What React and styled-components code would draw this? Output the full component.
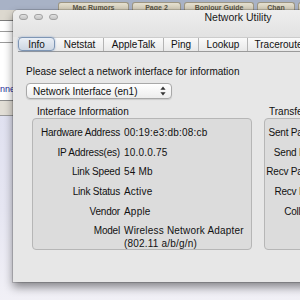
import React from 'react';
import styled, { createGlobalStyle } from 'styled-components';

const Global = createGlobalStyle`
  html, body {
    margin: 0;
    padding: 0;
    overflow: hidden;
  }
  body {
    font-family: "Liberation Sans", Arial, sans-serif;
  }
`;

const Desktop = styled.div`
  position: relative;
  width: 300px;
  height: 300px;
  overflow: hidden;
  background: linear-gradient(180deg, #d9dbee 0%, #e6e6f2 70%, #f1f0f6 100%);
`;

// browser page behind the utility window
const BrowserBar = styled.div`
  height: 10px;
  background: #a8b2c6;
  display: flex;
  align-items: flex-end;
  gap: 3px;
  padding-left: 58px;
  overflow: hidden;
`;

const BrowserTab = styled.div`
  flex: none;
  width: ${p => p.w}px;
  height: 7px;
  background: linear-gradient(180deg, #e4dfcf, #cfc8b4);
  border: 1px solid #9d9683;
  border-bottom: none;
  border-radius: 3px 3px 0 0;
  font-size: 7px;
  font-weight: bold;
  color: #5a5646;
  text-align: center;
  line-height: 9px;
  overflow: hidden;
  white-space: nowrap;
`;

const Page = styled.div`
  display: flex;
  flex-direction: column;
`;

const Band = styled.div`
  height: ${p => p.h}px;
  background: ${p => p.bg};
  border-bottom: 1px solid ${p => p.line || 'transparent'};
  font-size: 9px;
  color: #2b2b9c;
  line-height: ${p => p.h}px;
  white-space: nowrap;
`;

// the Network Utility window
const Window = styled.div`
  position: absolute;
  left: 13px;
  top: 10px;
  width: 450px;
  height: 272px;
  background: #e7e7e7;
  border-radius: 5px 5px 0 0;
  box-shadow: 0 5px 10px rgba(0, 0, 0, 0.45), 0 0 0 1px rgba(0, 0, 0, 0.15);
  color: #111;
  font-size: 10px;
`;

const TitleBar = styled.div`
  height: 27px;
  display: grid;
  grid-template-columns: 1fr auto 1fr;
  align-items: start;
  background: linear-gradient(180deg, #eeeeee, #e2e2e2);
  border-radius: 5px 5px 0 0;
`;

const Lights = styled.div`
  display: flex;
  gap: 6px;
  padding: 4px 0 0 6px;
`;

const Light = styled.span`
  width: 9px;
  height: 6px;
  border-radius: 3px;
  background: linear-gradient(180deg, #e0e0e0, #c4c4c4);
  border: 1px solid #a2a2a2;
  box-sizing: border-box;
`;

const Title = styled.div`
  font-size: 10.5px;
  line-height: 12px;
  padding-top: 1px;
  color: #1a1a1a;
`;

const TabStrip = styled.div`
  display: flex;
  height: 13px;
  margin-left: 5px;
  background: linear-gradient(180deg, #fafafa, #e8e8e8);
  border-top: 1px solid #cccccc;
  border-bottom: 1px solid #9a9a9a;
`;

const Tab = styled.div`
  flex: none;
  width: ${p => p.w}px;
  box-sizing: border-box;
  text-align: center;
  line-height: 13px;
  border-left: 1px solid ${p => (p.sep ? '#b4b4b4' : 'transparent')};
  ${p => p.active && `
    margin-top: -1px;
    height: 14px;
    line-height: 14px;
    border: 1px solid #7d95b4;
    border-radius: 4px;
    background: linear-gradient(180deg, #e9eef5, #cdd6e2);
    box-shadow: 0 0 2px rgba(90, 130, 190, 0.6);
  `}
`;

const Body = styled.div`
  padding: 14px 0 0 13px;
`;

const Prompt = styled.div`
  line-height: 12px;
`;

const Popup = styled.div`
  margin-top: 5px;
  width: 146px;
  height: 16px;
  box-sizing: border-box;
  display: flex;
  align-items: center;
  justify-content: space-between;
  padding: 0 5px 0 6px;
  border: 1px solid #a8a8a8;
  border-radius: 4px;
  background: linear-gradient(180deg, #ffffff, #ededed);
  box-shadow: 0 1px 1px rgba(0, 0, 0, 0.12);
`;

const Groups = styled.div`
  display: flex;
  gap: 12px;
  margin: 7px 0 0 6px;
`;

const Group = styled.div`
  flex: none;
  width: ${p => p.w}px;
`;

const GroupLabel = styled.div`
  line-height: 12px;
  padding-left: ${p => p.indent}px;
`;

const GroupBox = styled.div`
  height: 132px;
  box-sizing: border-box;
  border: 1px solid #b6b6b6;
  border-radius: 4px;
  background: #dcdcdc;
  padding-top: 7px;
  display: grid;
  grid-template-columns: ${p => p.col}px auto;
  column-gap: 4px;
  row-gap: 6.7px;
  align-content: start;
  font-size: 10px;
`;

const Label = styled.div`
  text-align: right;
  line-height: 13px;
  letter-spacing: -0.2px;
  white-space: nowrap;
`;

const Value = styled.div`
  letter-spacing: 0.2px;
  line-height: 13px;
  white-space: ${p => (p.wrap ? 'normal' : 'nowrap')};
  width: 124px;
`;

const Arrows = () => (
  <svg width="6" height="10" viewBox="0 0 6 10">
    <path d="M3 0.5 L5.6 3.8 H0.4 Z" fill="#333" />
    <path d="M3 9.5 L5.6 6.2 H0.4 Z" fill="#333" />
  </svg>
);

const tabs = [
  { name: 'Info', w: 37, active: true },
  { name: 'Netstat', w: 48 },
  { name: 'AppleTalk', w: 60, sep: true },
  { name: 'Ping', w: 35, sep: true },
  { name: 'Lookup', w: 49, sep: true },
  { name: 'Traceroute', w: 62, sep: true },
  { name: 'Whois', w: 44, sep: true },
  { name: 'Finger', w: 46, sep: true },
];

const info = [
  ['Hardware Address', '00:19:e3:db:08:cb'],
  ['IP Address(es)', '10.0.0.75'],
  ['Link Speed', '54 Mb'],
  ['Link Status', 'Active'],
  ['Vendor', 'Apple'],
  ['Model', 'Wireless Network Adapter (802.11 a/b/g/n)'],
];

const transfer = [
  ['Sent Packets', '0'],
  ['Send Errors', '0'],
  ['Recv Packets', '0'],
  ['Recv Errors', '0'],
  ['Collisions', '0'],
];

export default function App() {
  return (
    <>
      <Global />
      <Desktop>
        <BrowserBar>
          <BrowserTab w={69}>Mac Rumors</BrowserTab>
          <BrowserTab w={47}>Page 2</BrowserTab>
          <BrowserTab w={68}>Bonjour Guide</BrowserTab>
          <BrowserTab w={36}>Chan</BrowserTab>
          <BrowserTab w={40}>News</BrowserTab>
        </BrowserBar>
        <Page>
          <Band h={10} bg="#dcd8cf" line="#7c7c7c" />
          <Band h={10} bg="#ffffff" line="#9a9a9a" />
          <Band h={10} bg="#ffffff" line="#9a9a9a" />
          <Band h={37} bg="#ffffff" />
          <Band h={16} bg="#ffffff">nne</Band>
          <Band h={2} bg="#ffffff" line="#8c8c8c" />
          <Band h={14} bg="#e2ded6" line="#9a9a9a" />
        </Page>

        <Window>
          <TitleBar>
            <Lights>
              <Light />
              <Light />
              <Light />
            </Lights>
            <Title>Network Utility</Title>
          </TitleBar>
          <TabStrip>
            {tabs.map(t => (
              <Tab key={t.name} w={t.w} active={t.active} sep={t.sep}>
                {t.name}
              </Tab>
            ))}
          </TabStrip>
          <Body>
            <Prompt>Please select a network interface for information</Prompt>
            <Popup>
              <span>Network Interface (en1)</span>
              <Arrows />
            </Popup>
            <Groups>
              <Group w={220}>
                <GroupLabel indent={5}>Interface Information</GroupLabel>
                <GroupBox col={87}>
                  {info.map(([k, v]) => (
                    <React.Fragment key={k}>
                      <Label>{k}</Label>
                      <Value wrap={k === 'Model'}>{v}</Value>
                    </React.Fragment>
                  ))}
                </GroupBox>
              </Group>
              <Group w={200}>
                <GroupLabel indent={5}>Transfer Statistics</GroupLabel>
                <GroupBox col={60}>
                  {transfer.map(([k, v]) => (
                    <React.Fragment key={k}>
                      <Label>{k}</Label>
                      <Value>{v}</Value>
                    </React.Fragment>
                  ))}
                </GroupBox>
              </Group>
            </Groups>
          </Body>
        </Window>
      </Desktop>
    </>
  );
}
